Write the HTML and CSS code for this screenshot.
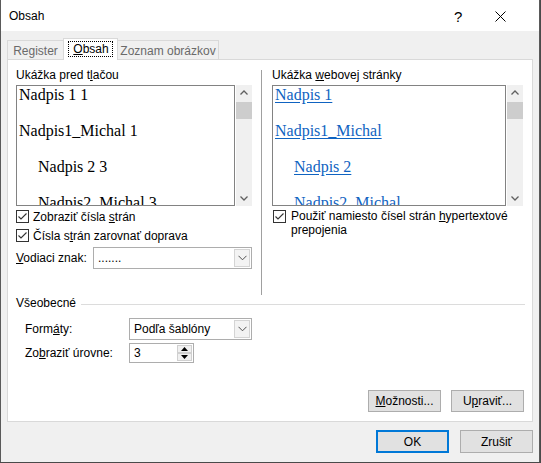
FILE: index.html
```html
<!DOCTYPE html>
<html>
<head>
<meta charset="utf-8">
<link rel="stylesheet" href="styles.css">
</head>
<body>
<div class="window">
  <div class="titlebar">
    <span class="title">Obsah</span>
    <span class="help">?</span>
    <span class="close"><svg width="11" height="11" viewBox="0 0 11 11"><path d="M0.5 0.5 L10.5 10.5 M10.5 0.5 L0.5 10.5" stroke="#000" stroke-width="1" fill="none"/></svg></span>
  </div>
  <div class="client">
    <div class="tabs">
      <div class="tab t-register">Register</div>
      <div class="tab t-obsah selected"><span class="focus"><u>O</u>bsah</span></div>
      <div class="tab t-zoznam">Zoznam obrázkov</div>
    </div>
    <div class="panel">
      <div class="top">
        <div class="col left">
          <div class="label">Ukážka pred t<u>l</u>ačou</div>
          <div class="preview">
            <div class="list">
              <div class="item">Nadpis 1 1</div>
              <div class="item">Nadpis1_Michal 1</div>
              <div class="item ind">Nadpis 2 3</div>
              <div class="item ind">Nadpis2_Michal 3</div>
            </div>
            <div class="scroll">
              <svg class="arr" width="16" height="16" viewBox="0 0 16 16"><path d="M4.5 9.5 L8 6 L11.5 9.5" stroke="#606060" stroke-width="1.3" fill="none"/></svg>
              <div class="thumb"></div>
              <div class="track"></div>
              <svg class="arr" width="16" height="16" viewBox="0 0 16 16"><path d="M4.5 6.5 L8 10 L11.5 6.5" stroke="#606060" stroke-width="1.3" fill="none"/></svg>
            </div>
          </div>
          <div class="check-row">
            <span class="cb"><svg width="11" height="11" viewBox="0 0 11 11"><path d="M1.5 5.5 L4 8 L9.5 2.5" stroke="#333" stroke-width="1.1" fill="none"/></svg></span>
            <span>Zobraziť čísla <u>s</u>trán</span>
          </div>
          <div class="check-row">
            <span class="cb"><svg width="11" height="11" viewBox="0 0 11 11"><path d="M1.5 5.5 L4 8 L9.5 2.5" stroke="#333" stroke-width="1.1" fill="none"/></svg></span>
            <span>Čísla s<u>t</u>rán zarovnať doprava</span>
          </div>
          <div class="field-row">
            <span class="flabel"><u>V</u>odiaci znak:</span>
            <div class="combo combo-leader">
              <span class="cval">.......</span>
              <span class="cbtn"><svg width="9" height="6" viewBox="0 0 9 6"><path d="M0.5 0.8 L4.5 4.8 L8.5 0.8" stroke="#505050" stroke-width="1" fill="none"/></svg></span>
            </div>
          </div>
        </div>
        <div class="sep"></div>
        <div class="col right">
          <div class="label">Ukážka <u>w</u>ebovej stránky</div>
          <div class="preview">
            <div class="list links">
              <div class="item"><span class="lnk">Nadpis 1</span></div>
              <div class="item"><span class="lnk">Nadpis1_Michal</span></div>
              <div class="item ind"><span class="lnk">Nadpis 2</span></div>
              <div class="item ind"><span class="lnk">Nadpis2_Michal</span></div>
            </div>
            <div class="scroll">
              <svg class="arr" width="16" height="16" viewBox="0 0 16 16"><path d="M4.5 9.5 L8 6 L11.5 9.5" stroke="#606060" stroke-width="1.3" fill="none"/></svg>
              <div class="thumb"></div>
              <div class="track"></div>
              <svg class="arr" width="16" height="16" viewBox="0 0 16 16"><path d="M4.5 6.5 L8 10 L11.5 6.5" stroke="#606060" stroke-width="1.3" fill="none"/></svg>
            </div>
          </div>
          <div class="check-row2">
            <span class="cb"><svg width="11" height="11" viewBox="0 0 11 11"><path d="M1.5 5.5 L4 8 L9.5 2.5" stroke="#333" stroke-width="1.1" fill="none"/></svg></span>
            <span class="ctext">Použiť namiesto čísel strán <u>h</u>ypertextové prepojenia</span>
          </div>
        </div>
      </div>
      <div class="general">
        <div class="ghead"><span>Všeobecné</span><span class="gline"></span></div>
        <div class="grow">
          <span class="glabel">Form<u>á</u>ty:</span>
          <div class="combo combo-fmt">
            <span class="cval">Podľa šablóny</span>
            <span class="cbtn"><svg width="9" height="6" viewBox="0 0 9 6"><path d="M0.5 0.8 L4.5 4.8 L8.5 0.8" stroke="#505050" stroke-width="1" fill="none"/></svg></span>
          </div>
        </div>
        <div class="grow grow2">
          <span class="glabel">Zo<u>b</u>raziť úrovne:</span>
          <div class="spin">
            <span class="sval">3</span>
            <span class="sbtns">
              <span class="sb"><svg width="7" height="4" viewBox="0 0 7 4"><path d="M0 4 L3.5 0 L7 4 Z" fill="#000"/></svg></span>
              <span class="sb"><svg width="7" height="4" viewBox="0 0 7 4"><path d="M0 0 L3.5 4 L7 0 Z" fill="#000"/></svg></span>
            </span>
          </div>
        </div>
      </div>
      <div class="panel-buttons">
        <div class="btn"><u>M</u>ožnosti...</div>
        <div class="btn">U<u>p</u>raviť...</div>
      </div>
    </div>
    <div class="dialog-buttons">
      <div class="btn btn-ok">OK</div>
      <div class="btn">Zrušiť</div>
    </div>
  </div>
</div>
</body>
</html>
```
FILE: styles.css
```css
* { box-sizing: border-box; }
html, body { margin: 0; padding: 0; }
body {
  width: 541px;
  height: 463px;
  background: #4a4a4a;
  font-family: "Liberation Sans", Arial, sans-serif;
  font-size: 12px;
  color: #000;
  overflow: hidden;
}
u { text-decoration: underline; text-underline-offset: 1px; }
.window {
  width: 540px;
  height: 462px;
  border-left: 1px solid #5a5a5a;
  border-right: 1px solid #5a5a5a;
  background: #f0f0f0;
  display: flex;
  flex-direction: column;
}
.titlebar {
  height: 31px;
  background: #fff;
  display: flex;
  align-items: center;
  padding-left: 8px;
  padding-top: 1px;
}
.title { flex: 1; font-size: 12px; }
.help { font-size: 15px; width: 41px; }
.close { width: 44px; display: flex; align-items: center; }
.client {
  flex: 1;
  padding: 7px 6px 0 6px;
  display: flex;
  flex-direction: column;
}
.tabs {
  height: 21px;
  display: flex;
  align-items: flex-end;
}
.tab {
  height: 19px;
  border-top: 1px solid #d9d9d9;
  background: #f0f0f0;
  color: #6a6a6a;
  display: flex;
  align-items: center;
  justify-content: center;
  padding-top: 1px;
}
.t-register { width: 56px; border-left: 1px solid #d9d9d9; }
.t-obsah { width: 55px; }
.t-zoznam { width: 101px; border-right: 1px solid #d9d9d9; }
.tab.selected {
  height: 22px;
  margin-bottom: -1px;
  background: #fff;
  color: #000;
  border: 1px solid #d9d9d9;
  border-bottom: none;
  position: relative;
  z-index: 1;
  padding-top: 0;
  padding-bottom: 2px;
}
.focus {
  outline: 1px dotted #000;
  padding: 1px 3px 1px 4px;
  line-height: 12px;
}
.panel {
  height: 363px;
  background: #fff;
  border: 1px solid #d9d9d9;
  padding: 8px 7px 9px 8px;
  display: flex;
  flex-direction: column;
}
.top {
  display: grid;
  grid-template-columns: 236px 1px 252px;
  column-gap: 9px;
  height: 228px;
}
.top .right { margin-left: 1px; }
.sep { background: #a0a0a0; margin-top: 2px; height: 225px; }
.label { line-height: 14px; height: 14px; }
.preview {
  margin-top: 3px;
  height: 121px;
  display: flex;
}
.list {
  flex: 1;
  border: 1px solid #828282;
  overflow: hidden;
  padding: 0 0 0 2px;
  font-family: "Liberation Serif", "Times New Roman", serif;
  font-size: 16px;
}
.item { line-height: 18px; height: 18px; margin-bottom: 18px; white-space: nowrap; }
.item.ind { padding-left: 19px; }
.links .lnk { color: #0f63c1; text-decoration: underline; text-underline-offset: 2px; }
.scroll {
  width: 16px;
  background: #f0f0f0;
  display: flex;
  flex-direction: column;
  margin-left: 1px;
}
.arr { display: block; flex: none; }
.thumb { height: 17px; background: #cdcdcd; margin: 1px 0 0 0; flex: none; }
.track { flex: 1; }
.check-row {
  height: 19px;
  display: flex;
  align-items: center;
}
.preview + .check-row { margin-top: 1px; }
.cb {
  width: 13px;
  height: 13px;
  border: 1px solid #333;
  background: #fff;
  margin-right: 4px;
  flex: none;
  display: flex;
  align-items: center;
  justify-content: center;
}
.check-row2 {
  margin-top: 4px;
  display: flex;
  align-items: flex-start;
  padding-left: 1px;
}
.ctext { line-height: 14px; margin-top: -1px; margin-left: 1px; width: 230px; }
.field-row {
  margin-top: 2px;
  display: flex;
  align-items: center;
  height: 22px;
}
.flabel { width: 77px; }
.combo {
  height: 22px;
  border: 1px solid #adadad;
  background: #fff;
  display: flex;
  align-items: center;
  padding: 1px;
}
.combo-leader { width: 159px; }
.combo-fmt { width: 123px; }
.cval { flex: 1; padding-left: 3px; }
.cbtn {
  width: 16px;
  height: 18px;
  border: 1px solid #d4d4d4;
  background: #f3f3f3;
  display: flex;
  align-items: center;
  justify-content: center;
}
.ghead {
  height: 14px;
  line-height: 14px;
  display: flex;
  align-items: center;
}
.gline { flex: 1; height: 1px; background: #dcdcdc; margin-left: 5px; margin-top: 2px; }
.grow {
  display: flex;
  align-items: center;
  height: 22px;
  margin-top: 8px;
  padding-left: 9px;
}
.grow2 { margin-top: 3px; height: 20px; }
.glabel { width: 104px; }
.spin {
  width: 65px;
  height: 20px;
  border: 1px solid #adadad;
  background: #fff;
  display: flex;
  padding: 1px;
}
.sval { flex: 1; padding-left: 3px; line-height: 16px; }
.sbtns { width: 15px; display: flex; flex-direction: column; }
.sb {
  flex: 1;
  background: #f0f0f0;
  border: 1px solid #d0d0d0;
  display: flex;
  align-items: center;
  justify-content: center;
}
.panel-buttons {
  margin-top: auto;
  display: flex;
  justify-content: flex-end;
  gap: 10px;
  padding-right: 1px;
}
.btn {
  width: 73px;
  height: 22px;
  background: #e1e1e1;
  border: 1px solid #adadad;
  display: flex;
  align-items: center;
  justify-content: center;
}
.dialog-buttons {
  margin-top: 8px;
  display: flex;
  justify-content: flex-end;
  gap: 11px;
}
.dialog-buttons .btn { height: 23px; }
.btn-ok { border: 2px solid #0078d7; }
```
